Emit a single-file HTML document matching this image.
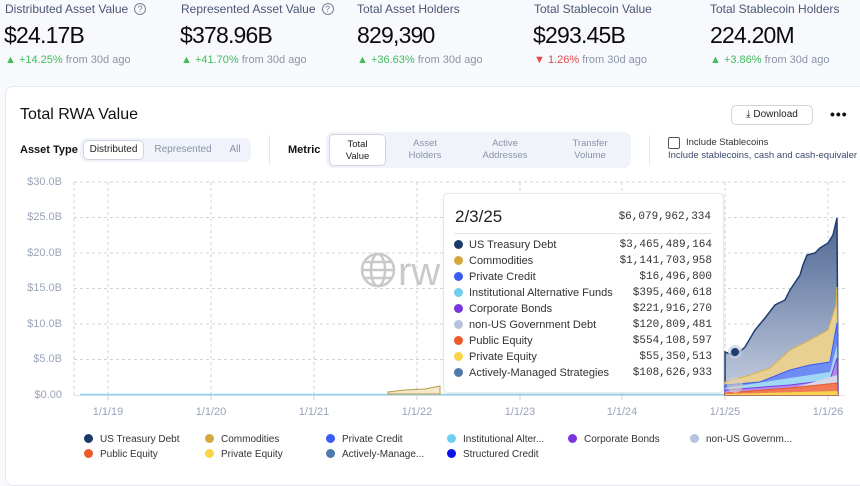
<!DOCTYPE html>
<html><head><meta charset="utf-8"><style>
*{margin:0;padding:0;box-sizing:border-box}
body{width:860px;height:468px;overflow:hidden;background:#f7f9fc;font-family:"Liberation Sans",sans-serif;position:relative;color:#111}
.a{position:absolute;white-space:nowrap}
.lab{font-size:12px;color:#4b5675}
.val{font-size:23px;color:#0b0b0b;letter-spacing:-0.8px}
.chg{font-size:11px;color:#8a93a8}
.g{color:#3fbf5a}.r{color:#e5484d}
.q{display:inline-block;width:12px;height:12px;border:1.2px solid #7a8299;border-radius:50%;font-size:9px;text-align:center;line-height:10px;color:#7a8299;vertical-align:1px;margin-left:6px}
.card{position:absolute;left:5px;top:86px;width:870px;height:400px;background:#fff;border:1px solid #e6e9f0;border-radius:8px}
.seg{position:absolute;background:#f0f3fa;border-radius:7px}
.btn{position:absolute;background:#fff;border:1px solid #cfd4de;border-radius:5px;font-size:10px;color:#222;text-align:center}
.opt{position:absolute;font-size:10px;color:#8a92a6;text-align:center;line-height:12px}
.yl{position:absolute;right:798px;font-size:11px;color:#9aa3b8;text-align:right}
.xl{position:absolute;font-size:11px;color:#9aa3b8;width:50px;text-align:center}
.tt{position:absolute;left:443px;top:193px;width:281px;height:200px;background:#fff;border:1px solid #e3e7ee;border-radius:5px;box-shadow:0 1px 4px rgba(0,0,0,.05)}
.row{position:absolute;left:10px;width:258px;font-size:11px;color:#333}
.row i{display:inline-block;width:9px;height:9px;border-radius:50%;vertical-align:-1px;margin-right:6px}
.row b{position:absolute;right:0;font-weight:normal;font-family:"Liberation Mono",monospace;color:#333}
.lg{position:absolute;font-size:10px;color:#333;white-space:nowrap}
.lg i{display:inline-block;width:9px;height:9px;border-radius:50%;vertical-align:-1px;margin-right:7px}
</style></head><body>
<div class="a lab" style="left:5px;top:2px">Distributed Asset Value<span class="q">?</span></div>
<div class="a val" style="left:4px;top:22px">$24.17B</div>
<div class="a chg" style="left:5px;top:54px"><span class="g">▲ +14.25%</span> from 30d ago</div>
<div class="a lab" style="left:181px;top:2px">Represented Asset Value<span class="q">?</span></div>
<div class="a val" style="left:180px;top:22px">$378.96B</div>
<div class="a chg" style="left:181px;top:54px"><span class="g">▲ +41.70%</span> from 30d ago</div>
<div class="a lab" style="left:357px;top:2px">Total Asset Holders</div>
<div class="a val" style="left:357px;top:22px">829,390</div>
<div class="a chg" style="left:357px;top:54px"><span class="g">▲ +36.63%</span> from 30d ago</div>
<div class="a lab" style="left:534px;top:2px">Total Stablecoin Value</div>
<div class="a val" style="left:533px;top:22px">$293.45B</div>
<div class="a chg" style="left:534px;top:54px"><span class="r">▼ 1.26%</span> from 30d ago</div>
<div class="a lab" style="left:710px;top:2px">Total Stablecoin Holders</div>
<div class="a val" style="left:710px;top:22px">224.20M</div>
<div class="a chg" style="left:710px;top:54px"><span class="g">▲ +3.86%</span> from 30d ago</div>

<div class="card"></div>
<div class="a" style="left:20px;top:106px;font-size:16px;color:#111">Total RWA Value</div>
<div class="btn" style="left:731px;top:105px;width:82px;height:20px;line-height:18px;font-size:10px">⤓ Download</div>
<div class="a" style="left:830px;top:106px;font-size:14px;letter-spacing:1px;font-weight:bold">•••</div>

<div class="a" style="left:20px;top:144px;font-size:11px;font-weight:bold">Asset Type</div>
<div class="seg" style="left:80px;top:138px;width:171px;height:24px"></div>
<div class="btn" style="left:83px;top:140px;width:61px;height:20px;line-height:18px">Distributed</div>
<div class="opt" style="left:150px;top:144px;width:66px">Represented</div>
<div class="opt" style="left:222px;top:144px;width:26px">All</div>
<div class="a" style="left:269px;top:135px;width:1px;height:30px;background:#e3e6ec"></div>
<div class="a" style="left:288px;top:144px;font-size:11px;font-weight:bold">Metric</div>
<div class="seg" style="left:326px;top:132px;width:305px;height:36px"></div>
<div class="btn" style="left:329px;top:134px;width:57px;height:32px;padding-top:4px;line-height:12px;font-size:9.5px">Total<br>Value</div>
<div class="opt" style="left:400px;top:138px;width:50px;font-size:9.5px">Asset<br>Holders</div>
<div class="opt" style="left:475px;top:138px;width:60px;font-size:9.5px">Active<br>Addresses</div>
<div class="opt" style="left:560px;top:138px;width:60px;font-size:9.5px">Transfer<br>Volume</div>
<div class="a" style="left:649px;top:135px;width:1px;height:30px;background:#e3e6ec"></div>
<div class="a" style="left:668px;top:137px;width:12px;height:12px;border:1px solid #555;border-radius:2px;background:#fff"></div>
<div class="a" style="left:686px;top:137px;font-size:9.5px;color:#333">Include Stablecoins</div>
<div class="a" style="left:668px;top:150px;font-size:9.5px;color:#3a4a6a">Include stablecoins, cash and cash-equivaler</div>

<div class="yl" style="top:176px">$30.0B</div>
<div class="yl" style="top:211px">$25.0B</div>
<div class="yl" style="top:247px">$20.0B</div>
<div class="yl" style="top:282px">$15.0B</div>
<div class="yl" style="top:318px">$10.0B</div>
<div class="yl" style="top:353px">$5.0B</div>
<div class="yl" style="top:389px">$0.00</div>

<svg class="a" style="left:0;top:0" width="860" height="468">
<defs><linearGradient id="gb" x1="0" y1="0" x2="0" y2="1"><stop offset="0" stop-color="#4c6592"/><stop offset="1" stop-color="#c4cee0"/></linearGradient></defs>
<g stroke="#cfd3da" stroke-dasharray="3,3" stroke-width="1">
<line x1="74" y1="182" x2="845" y2="182"/><line x1="74" y1="217.5" x2="845" y2="217.5"/><line x1="74" y1="253" x2="845" y2="253"/><line x1="74" y1="288.5" x2="845" y2="288.5"/><line x1="74" y1="324" x2="845" y2="324"/><line x1="74" y1="359.5" x2="845" y2="359.5"/>
<line x1="74" y1="182" x2="74" y2="395"/>
<line x1="108" y1="182" x2="108" y2="395"/><line x1="211" y1="182" x2="211" y2="395"/><line x1="314" y1="182" x2="314" y2="395"/><line x1="417" y1="182" x2="417" y2="395"/><line x1="520" y1="182" x2="520" y2="395"/><line x1="622" y1="182" x2="622" y2="395"/><line x1="725" y1="182" x2="725" y2="395"/><line x1="828" y1="182" x2="828" y2="395"/>
</g>
<line x1="74" y1="395.5" x2="845" y2="395.5" stroke="#e0e3ea"/>
<g stroke="#cfd3da"><line x1="108" y1="395" x2="108" y2="400"/><line x1="211" y1="395" x2="211" y2="400"/><line x1="314" y1="395" x2="314" y2="400"/><line x1="417" y1="395" x2="417" y2="400"/><line x1="520" y1="395" x2="520" y2="400"/><line x1="622" y1="395" x2="622" y2="400"/><line x1="725" y1="395" x2="725" y2="400"/><line x1="828" y1="395" x2="828" y2="400"/></g>
<g fill="none" stroke="#c9c9c9" stroke-width="2.5"><circle cx="378" cy="270" r="16"/><ellipse cx="378" cy="270" rx="7" ry="16"/><line x1="362" y1="270" x2="394" y2="270"/><line x1="365" y1="262" x2="391" y2="262"/><line x1="365" y1="278" x2="391" y2="278"/></g>
<text x="398" y="285" font-size="40" fill="#c9c9c9" font-family="Liberation Sans">rw</text>
<line x1="80" y1="394.5" x2="725" y2="394.5" stroke="#8fd3ee" stroke-width="1.5"/>
<path d="M388 392 L396 391 L405 390 L415 389.5 L425 389 L435 387 L440 386 L440 394 L388 394Z" fill="#f3e8c9" stroke="#b89a4a" stroke-width="1"/>
<path d="M725 352 L735 356 L745 347 L755 330 L765 318 L775 305 L785 300 L790 290 L800 275 L803 265 L807 255 L815 253 L820 248 L828 243 L833 235 L837 218 L838 395 L725 395Z" fill="url(#gb)" stroke="#1f3d70" stroke-width="1.5"/>
<path d="M725 382 L750 375 L770 368 L790 350 L800 345 L810 340 L828 330 L836 305 L837 287 L838 395 L725 395Z" fill="#e8cf92" stroke="#d9b14e"/>
<path d="M725 385 L760 382 L790 370 L810 365 L830 362 L837 323 L838 395 L725 395Z" fill="#6f8cf5" stroke="#3a5cf0"/>
<path d="M725 388 L790 378 L830 372 L837 345 L838 395 L725 395Z" fill="#9ed8f2"/>
<path d="M725 390 L790 385 L830 380 L837 358 L838 395 L725 395Z" fill="#b48ae8" stroke="#7b3ee0"/>
<path d="M725 392 L790 389 L837 375 L838 395 L725 395Z" fill="#d3d8ea"/>
<path d="M725 393 L790 388 L837 383 L838 395 L725 395Z" fill="#f07a55" stroke="#e8562a"/>
<path d="M725 394 L837 391 L838 395 L725 395Z" fill="#f7d450"/>
<circle cx="735" cy="352" r="7" fill="#c8d0de" opacity=".7"/><circle cx="735" cy="352" r="4" fill="#1f3d70"/>
<circle cx="735" cy="385" r="8" fill="#d8d0c0" opacity=".6"/>
</svg>

<div class="xl" style="left:83px;top:406px">1/1/19</div>
<div class="xl" style="left:186px;top:406px">1/1/20</div>
<div class="xl" style="left:289px;top:406px">1/1/21</div>
<div class="xl" style="left:392px;top:406px">1/1/22</div>
<div class="xl" style="left:495px;top:406px">1/1/23</div>
<div class="xl" style="left:597px;top:406px">1/1/24</div>
<div class="xl" style="left:700px;top:406px">1/1/25</div>
<div class="xl" style="left:803px;top:406px">1/1/26</div>

<div class="tt">
<div class="a" style="left:11px;top:13px;font-size:17px;color:#222">2/3/25</div>
<div class="a" style="right:12px;top:17px;font-size:11px;font-family:'Liberation Mono',monospace;color:#333">$6,079,962,334</div>
<div class="a" style="left:10px;top:39px;width:258px;height:1px;background:#e3e7f0"></div>
<div class="row" style="top:45px"><i style="background:#1b3a6b"></i>US Treasury Debt<b>$3,465,489,164</b></div>
<div class="row" style="top:61px"><i style="background:#d4a73f"></i>Commodities<b>$1,141,703,958</b></div>
<div class="row" style="top:77px"><i style="background:#3b5bf5"></i>Private Credit<b>$16,496,800</b></div>
<div class="row" style="top:93px"><i style="background:#6fcdf0"></i>Institutional Alternative Funds<b>$395,460,618</b></div>
<div class="row" style="top:109px"><i style="background:#7b35e0"></i>Corporate Bonds<b>$221,916,270</b></div>
<div class="row" style="top:125px"><i style="background:#b6c3dc"></i>non-US Government Debt<b>$120,809,481</b></div>
<div class="row" style="top:141px"><i style="background:#ef5a2a"></i>Public Equity<b>$554,108,597</b></div>
<div class="row" style="top:157px"><i style="background:#f8d54a"></i>Private Equity<b>$55,350,513</b></div>
<div class="row" style="top:173px"><i style="background:#4f79ad"></i>Actively-Managed Strategies<b>$108,626,933</b></div>
</div>

<div class="lg" style="left:84px;top:434px"><i style="background:#1b3a6b"></i>US Treasury Debt</div>
<div class="lg" style="left:205px;top:434px"><i style="background:#d4a73f"></i>Commodities</div>
<div class="lg" style="left:326px;top:434px"><i style="background:#3b5bf5"></i>Private Credit</div>
<div class="lg" style="left:447px;top:434px"><i style="background:#6fcdf0"></i>Institutional Alter...</div>
<div class="lg" style="left:568px;top:434px"><i style="background:#7b35e0"></i>Corporate Bonds</div>
<div class="lg" style="left:690px;top:434px"><i style="background:#b6c3dc"></i>non-US Governm...</div>
<div class="lg" style="left:84px;top:449px"><i style="background:#ef5a2a"></i>Public Equity</div>
<div class="lg" style="left:205px;top:449px"><i style="background:#f8d54a"></i>Private Equity</div>
<div class="lg" style="left:326px;top:449px"><i style="background:#4f79ad"></i>Actively-Manage...</div>
<div class="lg" style="left:447px;top:449px"><i style="background:#0a12e8"></i>Structured Credit</div>
</body></html>
